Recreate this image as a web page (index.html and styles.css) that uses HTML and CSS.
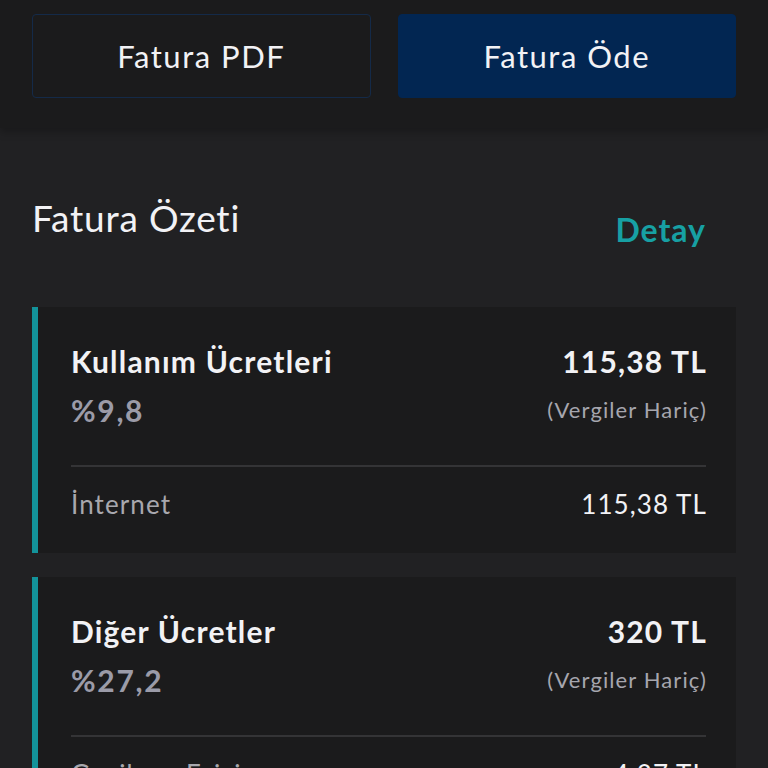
FILE: index.html
```html
<!DOCTYPE html>
<html lang="tr">
  <head>
    <meta charset="UTF-8" />
    <meta name="viewport" content="width=device-width, initial-scale=1.0" />
    <title>Fatura Özeti</title>
    <link rel="stylesheet" href="styles.css">
  </head>
  <body>
    <div class="top-bar">
      <button class="btn btn-outline">Fatura PDF</button>
      <button class="btn btn-primary">Fatura Öde</button>
    </div>
    <div class="content">
      <div class="summary-head">
        <h2>Fatura Özeti</h2>
        <a href="#" class="detail-link">Detay</a>
      </div>
      <div class="card">
        <div class="card-row">
          <div class="card-left">
            <h3>Kullanım Ücretleri</h3>
            <p class="percent">%9,8</p>
          </div>
          <div class="card-right">
            <p class="amount">115,38 TL</p>
            <p class="note">(Vergiler Hariç)</p>
          </div>
        </div>
        <div class="divider"></div>
        <div class="item-row">
          <span class="item-name">İnternet</span>
          <span class="item-value">115,38 TL</span>
        </div>
      </div>
      <div class="card">
        <div class="card-row">
          <div class="card-left">
            <h3>Diğer Ücretler</h3>
            <p class="percent">%27,2</p>
          </div>
          <div class="card-right">
            <p class="amount">320 TL</p>
            <p class="note">(Vergiler Hariç)</p>
          </div>
        </div>
        <div class="divider"></div>
        <div class="item-row">
          <span class="item-name">Gecikme Faizi</span>
          <span class="item-value">4,27 TL</span>
        </div>
      </div>
    </div>
  </body>
</html>
```

FILE: styles.css
```css
body {
  margin: 0;
  background-color: #212123;
  color: #f2f2f5;
  font-family: Lato, "Open Sans", sans-serif;
  overflow: hidden;
}
.top-bar {
  background-color: #1b1b1c;
  display: flex;
  gap: 27px;
  padding: 14px 32px 30px;
  box-shadow: 0 4px 8px rgba(0, 0, 0, 0.25);
}
.btn {
  flex: 1;
  height: 84px;
  border-radius: 4px;
  font-family: inherit;
  font-size: 31px;
  letter-spacing: 1.5px;
  color: #f2f2f5;
  cursor: pointer;
}
.btn-outline {
  background: none;
  border: 1px solid #142a48;
}
.btn-primary {
  background-color: #022652;
  border: 1px solid #022652;
}
.content {
  padding: 0 32px;
}
.summary-head {
  display: flex;
  justify-content: space-between;
  align-items: flex-start;
  padding-top: 70px;
  height: 179px;
  box-sizing: border-box;
}
.summary-head h2 {
  margin: 0;
  font-size: 37px;
  font-weight: normal;
  letter-spacing: 0.8px;
  line-height: 40px;
}
.detail-link {
  margin-top: 14px;
  margin-right: 30px;
  color: #17a0a3;
  font-size: 32px;
  font-weight: bold;
  letter-spacing: 1px;
  line-height: 36px;
  text-decoration: none;
}
.card {
  background-color: #1b1b1c;
  border-left: 6px solid #13939a;
  padding: 36px 30px 31px 33px;
  margin-bottom: 24px;
}
.card-row {
  display: flex;
  justify-content: space-between;
}
.card h3 {
  margin: 0;
  font-size: 30px;
  letter-spacing: 1.2px;
  line-height: 36px;
}
.percent {
  margin: 13px 0 0;
  font-size: 30px;
  font-weight: bold;
  letter-spacing: 1.7px;
  line-height: 36px;
  color: #9b9ba8;
}
.card-right {
  text-align: right;
}
.amount {
  margin: 0 -1px 0 0;
  font-size: 30px;
  font-weight: bold;
  letter-spacing: 1.2px;
  line-height: 36px;
}
.note {
  margin: 13px -1px 0 0;
  font-size: 22px;
  letter-spacing: 1.1px;
  line-height: 36px;
  color: #a6a6ae;
}
.divider {
  border-top: 2px solid #343436;
  margin: 37px 0 19px;
}
.item-row {
  display: flex;
  justify-content: space-between;
  font-size: 26px;
  letter-spacing: 1.1px;
  line-height: 36px;
}
.item-name {
  color: #a8a8ae;
}
.item-value {
  margin-right: -1px;
  color: #f2f2f5;
}
```
